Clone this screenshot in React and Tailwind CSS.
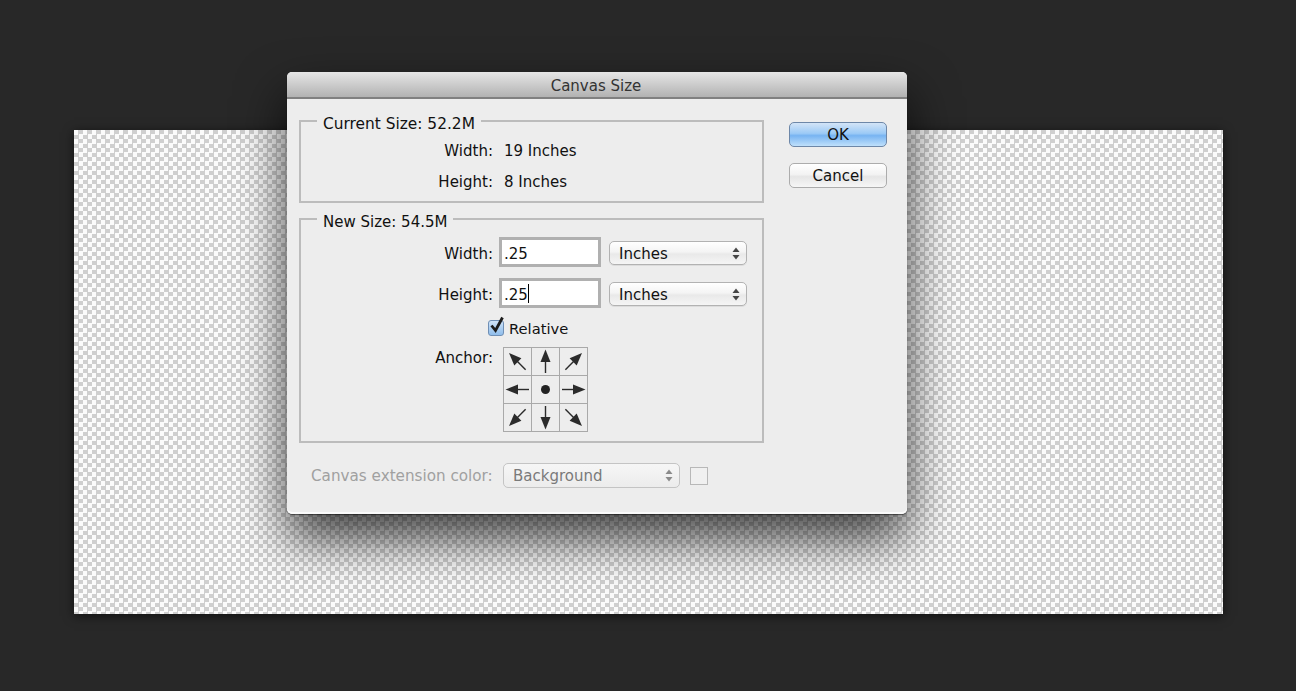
function Stepper({ dim }) {
  const c = dim ? "#8a8a8a" : "#444";
  return (
    <svg width="8" height="13" viewBox="0 0 8 13" className="shrink-0">
      <path d="M4 0.5 L7.5 5 L0.5 5 Z" fill={c} />
      <path d="M4 12.5 L7.5 8 L0.5 8 Z" fill={c} />
    </svg>
  );
}

function Select({ label }) {
  return (
    <div className="w-[138px] h-6 ml-2 mt-[2px] flex items-center justify-between pl-[9px] pr-[6px] rounded-[5px] border border-[#b2b2b2] bg-[linear-gradient(#ffffff,#f4f4f4_45%,#e9e9e9_55%,#f5f5f5)] text-[15px] text-[#111] shadow-[0_1px_0_#dcdcdc]">
      <span className="pt-[2px]">{label}</span>
      <Stepper />
    </div>
  );
}

function Field({ value, caret }) {
  return (
    <div className="w-[102px] h-[30px] ml-[6px] border-[3px] border-[#b0b0b0] bg-white flex items-center pl-[2px] pt-[4px] text-[15px] text-[#111]">
      <span>{value}</span>
      {caret && <span className="w-px h-[19px] mb-[4px] bg-black" />}
    </div>
  );
}

function Arrow({ angle }) {
  return (
    <svg width="27" height="27" viewBox="0 0 27 27">
      <g transform={`rotate(${angle} 13.5 13.5)`}>
        <path d="M13.5 1.5 L18.5 14 L8.5 14 Z" fill="#2b2b2b" />
        <path d="M13.5 12 L13.5 25" stroke="#2b2b2b" strokeWidth="1.4" />
      </g>
    </svg>
  );
}

function Anchor() {
  const angles = [-45, 0, 45, -90, null, 90, -135, 180, 135];
  return (
    <div className="grid grid-cols-[repeat(3,27px)] grid-rows-[repeat(3,27px)] gap-px w-[85px] h-[85px] bg-[#a9a9a9] border border-[#a9a9a9] ml-[10px]">
      {angles.map((a, i) => (
        <div key={i} className="bg-[#ededed] flex items-center justify-center">
          {a === null ? <div className="w-[9px] h-[9px] rounded-full bg-[#222]" /> : <Arrow angle={a} />}
        </div>
      ))}
    </div>
  );
}

function Group({ legend, legendSize, className, children }) {
  return (
    <fieldset className={`w-[465px] border-2 border-[#bcbcbc] ${className}`}>
      <legend className={`ml-[16px] px-[6px] h-5 leading-5 text-[#111] ${legendSize}`}>
        <span className="block translate-y-[3px]">{legend}</span>
      </legend>
      {children}
    </fieldset>
  );
}

export default function App() {
  return (
    <div className="relative w-[1296px] h-[691px] overflow-hidden bg-[#282828] pt-[130px] pl-[74px] font-['DejaVu_Sans',sans-serif]">
      <div className="w-[1149px] h-[484px] bg-[conic-gradient(#cfcfcf_25%,#fbfbfb_0_50%,#cfcfcf_0_75%,#fbfbfb_0)] bg-[length:9px_9px] shadow-[0_2px_10px_rgba(0,0,0,0.6)]" />

      <div className="absolute left-[287px] top-[72px] w-[620px] h-[442px] rounded-[5px] bg-[#ededed] flex flex-col shadow-[0_24px_50px_rgba(0,0,0,0.75),inset_0_-2px_0_#fafafa,0_1px_1px_rgba(0,0,0,0.5)]">
        <div className="h-[27px] shrink-0 flex items-center justify-center rounded-t-[5px] pt-[3px] pr-[2px] bg-[linear-gradient(#e6e6e6,#b2b2b2)] border-b-2 border-[#808080] text-[15px] text-[#333]">
          Canvas Size
        </div>

        <div className="flex flex-1 pl-3 pt-[12px]">
          <div className="flex flex-col">
            <Group legend="Current Size: 52.2M" legendSize="text-[15.4px]" className="h-[92px]">
              <div className="flex mt-[9px] text-[15px] text-[#111] h-[22px] items-center">
                <span className="w-[192px] text-right">Width:</span>
                <span className="ml-[11px]">19 Inches</span>
              </div>
              <div className="flex mt-[9px] text-[15px] text-[#111] h-[22px] items-center">
                <span className="w-[192px] text-right">Height:</span>
                <span className="ml-[11px]">8 Inches</span>
              </div>
            </Group>

            <Group legend="New Size: 54.5M" legendSize="text-[15px]" className="h-[234px] mt-[6px]">
              <div className="flex items-center mt-[8px] h-[30px] text-[15px] text-[#111]">
                <span className="w-[192px] text-right pt-[4px]">Width:</span>
                <Field value=".25" />
                <Select label="Inches" />
              </div>
              <div className="flex items-center mt-[11px] h-[30px] text-[15px] text-[#111]">
                <span className="w-[192px] text-right pt-[4px]">Height:</span>
                <Field value=".25" caret />
                <Select label="Inches" />
              </div>
              <div className="flex items-center mt-[10px] ml-[187px] h-[20px] text-[15px] text-[#111]">
                <div className="relative w-[16px] h-[16px] rounded-[3px] border border-[#6f8fb5] bg-[linear-gradient(#cfe3f8,#8fbdeb)]">
                  <svg width="20" height="20" viewBox="0 0 20 20" className="absolute left-[-1px] top-[-6px]">
                    <path d="M3.5 10.5 L7.5 15.5 L14.5 2.5" fill="none" stroke="#1c1c1c" strokeWidth="2.8" />
                  </svg>
                </div>
                <span className="ml-[5px] pt-[3px] text-[14.7px]">Relative</span>
              </div>
              <div className="flex mt-[9px] text-[15px] text-[#111]">
                <span className="w-[192px] text-right leading-[23px]">Anchor:</span>
                <Anchor />
              </div>
            </Group>

            <div className="flex items-center mt-[20px] ml-3 h-[25px] text-[15.2px] text-[#a0a0a0]">
              <span className="w-[192px] whitespace-nowrap pt-[2px]">Canvas extension color:</span>
              <div className="w-[177px] h-[25px] flex items-center justify-between pl-[9px] pr-[6px] rounded-[5px] border border-[#c4c4c4] bg-[linear-gradient(#f6f6f6,#ececec)] text-[15px] text-[#7a7a7a]">
                <span className="pt-[2px]">Background</span>
                <Stepper dim />
              </div>
              <div className="w-[18px] h-[18px] ml-[10px] border border-[#b8b8b8] bg-[#f0f0f0]" />
            </div>
          </div>

          <div className="flex flex-col ml-[25px] mt-[11px] text-[15px] text-[#111]">
            <div className="w-[98px] h-[25px] flex items-center justify-center rounded-[5px] border border-[#6d87a8] pt-[2px] bg-[linear-gradient(#d3e4f7,#9ccaf6_45%,#78b4f2_55%,#bfe0fb)]">
              OK
            </div>
            <div className="w-[98px] h-[25px] mt-4 flex items-center justify-center rounded-[5px] border border-[#acacac] pt-[2px] bg-[linear-gradient(#ffffff,#f3f3f3_45%,#e6e6e6_55%,#f6f6f6)]">
              Cancel
            </div>
          </div>
        </div>
      </div>
    </div>
  );
}
